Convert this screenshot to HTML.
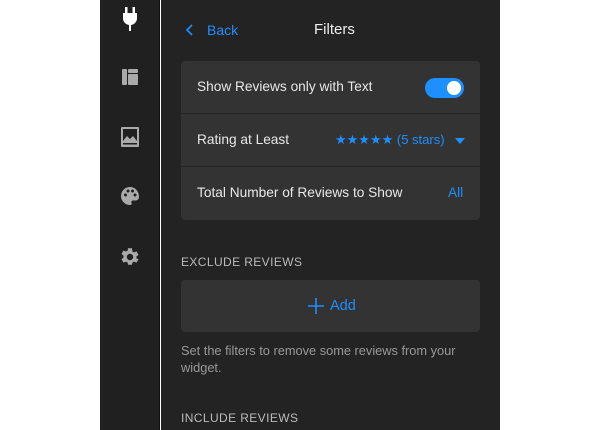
<!DOCTYPE html>
<html><head><meta charset="utf-8"><style>
*{margin:0;padding:0;box-sizing:border-box}
body{width:600px;height:430px;background:#fff;font-family:"Liberation Sans",sans-serif;position:relative;overflow:hidden}
#side{position:absolute;left:100px;top:0;width:60px;height:430px;background:#202020;border-right:1px solid #111}
#main{position:absolute;left:161px;top:0;width:339px;height:430px;background:#232323}
.ic{position:absolute;left:20px}
.t{position:absolute;font-size:13.7px;color:#e8e8e8;white-space:nowrap}
.card{position:absolute;left:20px;width:299px;background:#333;border-radius:4px}
.row{height:53px;border-bottom:1px solid #262626;position:relative}
.row:last-child{border-bottom:none}
.blue{color:#1e8fff}
.lbl{position:absolute;font-size:12px;letter-spacing:0.4px;color:#bbb;left:20px}
</style></head><body>
<div id="side">
<svg class="ic" style="top:5px" width="20" height="28" viewBox="0 0 20 28"><rect x="5" y="2" width="2.5" height="6" fill="#fff"/><rect x="12.5" y="2" width="2.5" height="6" fill="#fff"/><path d="M3 8h14v6a7 7 0 0 1-7 6a7 7 0 0 1-7-6z" fill="#fff"/><rect x="9" y="18" width="2" height="8" fill="#fff"/></svg>
<svg class="ic" style="top:68px" width="20" height="18" viewBox="0 0 20 18"><rect x="2" y="1" width="5" height="16" rx="1" fill="#aaa"/><rect x="8" y="1" width="10" height="4" rx="1" fill="#aaa"/><rect x="8" y="6" width="10" height="11" rx="1" fill="#aaa"/></svg>
<svg class="ic" style="top:126px" width="20" height="22" viewBox="0 0 20 22"><rect x="1" y="1" width="18" height="20" rx="1" fill="#aaa"/><rect x="3" y="3" width="14" height="12" fill="#202020"/><path d="M3 15l4-5 3 3 3-3 4 5z" fill="#aaa"/><rect x="3" y="17" width="14" height="1.5" fill="#202020"/></svg>
<svg class="ic" style="top:185px" width="20" height="22" viewBox="0 0 20 22"><path d="M10 2a9 9 0 0 0 0 18c1.5 0 2-1 1.5-2s0-2.5 1.5-2.5h2.5a3.5 3.5 0 0 0 3.5-3.5C19 6 15 2 10 2z" fill="#aaa"/><circle cx="5.5" cy="10" r="1.5" fill="#202020"/><circle cx="8" cy="6" r="1.5" fill="#202020"/><circle cx="12.5" cy="6" r="1.5" fill="#202020"/><circle cx="15" cy="10" r="1.5" fill="#202020"/></svg>
<svg class="ic" style="top:246px;left:19px" width="22" height="22" viewBox="0 0 24 24"><path fill="#aaa" d="M20.4 13a8.5 8.5 0 0 0 0-2l2.3-1.800-2.2-3.8-2.7 1.1a8.6 8.6 0 0 0-1.8-1L15.6 2h-4.4l-.4 2.5a8.6 8.6 0 0 0-1.8 1L6.3 4.4 4.1 8.2 6.4 10a8.5 8.5 0 0 0 0 2l-2.3 1.8 2.2 3.8 2.7-1.1a8.6 8.6 0 0 0 1.8 1l.4 2.5h4.4l.4-2.5a8.6 8.6 0 0 0 1.8-1l2.7 1.1 2.2-3.8zM13.4 15a3.5 3.5 0 1 1 0-7 3.5 3.5 0 0 1 0 7z" transform="translate(-1.4 0.5)"/></svg>
</div>
<div id="main">
<svg style="position:absolute;left:24px;top:23px" width="10" height="14" viewBox="0 0 10 14"><path d="M7 2L2 7l5 5" stroke="#1e8fff" stroke-width="1.6" fill="none"/></svg>
<div class="t blue" style="left:46px;top:22px;font-size:14px">Back</div>
<div class="t" style="left:153px;top:21px;font-size:15px;color:#eee">Filters</div>
<div class="card" style="top:61px">
<div class="row"><div class="t" style="left:16px;top:18px">Show Reviews only with Text</div>
<div style="position:absolute;left:244px;top:17px;width:39px;height:20px;border-radius:10px;background:#1e8fff"><div style="position:absolute;right:3px;top:3px;width:14px;height:14px;border-radius:50%;background:#fff"></div></div></div>
<div class="row"><div class="t" style="left:16px;top:18px">Rating at Least</div>
<div class="t blue" style="left:154px;top:18px;font-size:13px">★★★★★ (5 stars)</div>
<div style="position:absolute;left:274px;top:24px;border:5px solid transparent;border-top:6px solid #1e8fff;border-bottom:none"></div></div>
<div class="row"><div class="t" style="left:16px;top:18px">Total Number of Reviews to Show</div>
<div class="t blue" style="left:267px;top:18px">All</div></div>
</div>
<div class="lbl" style="top:255px">EXCLUDE REVIEWS</div>
<div class="card" style="top:280px;height:52px">
<svg style="position:absolute;left:127px;top:18px" width="16" height="16"><path d="M8 0v16M0 8h16" stroke="#1e8fff" stroke-width="1.6"/></svg>
<div class="t blue" style="left:149px;top:18px;font-size:14.5px">Add</div></div>
<div class="t" style="left:20px;top:342px;font-size:12.8px;color:#999;line-height:17px;white-space:normal;width:290px">Set the filters to remove some reviews from your widget.</div>
<div class="lbl" style="top:411px">INCLUDE REVIEWS</div>
</div>
</body></html>
